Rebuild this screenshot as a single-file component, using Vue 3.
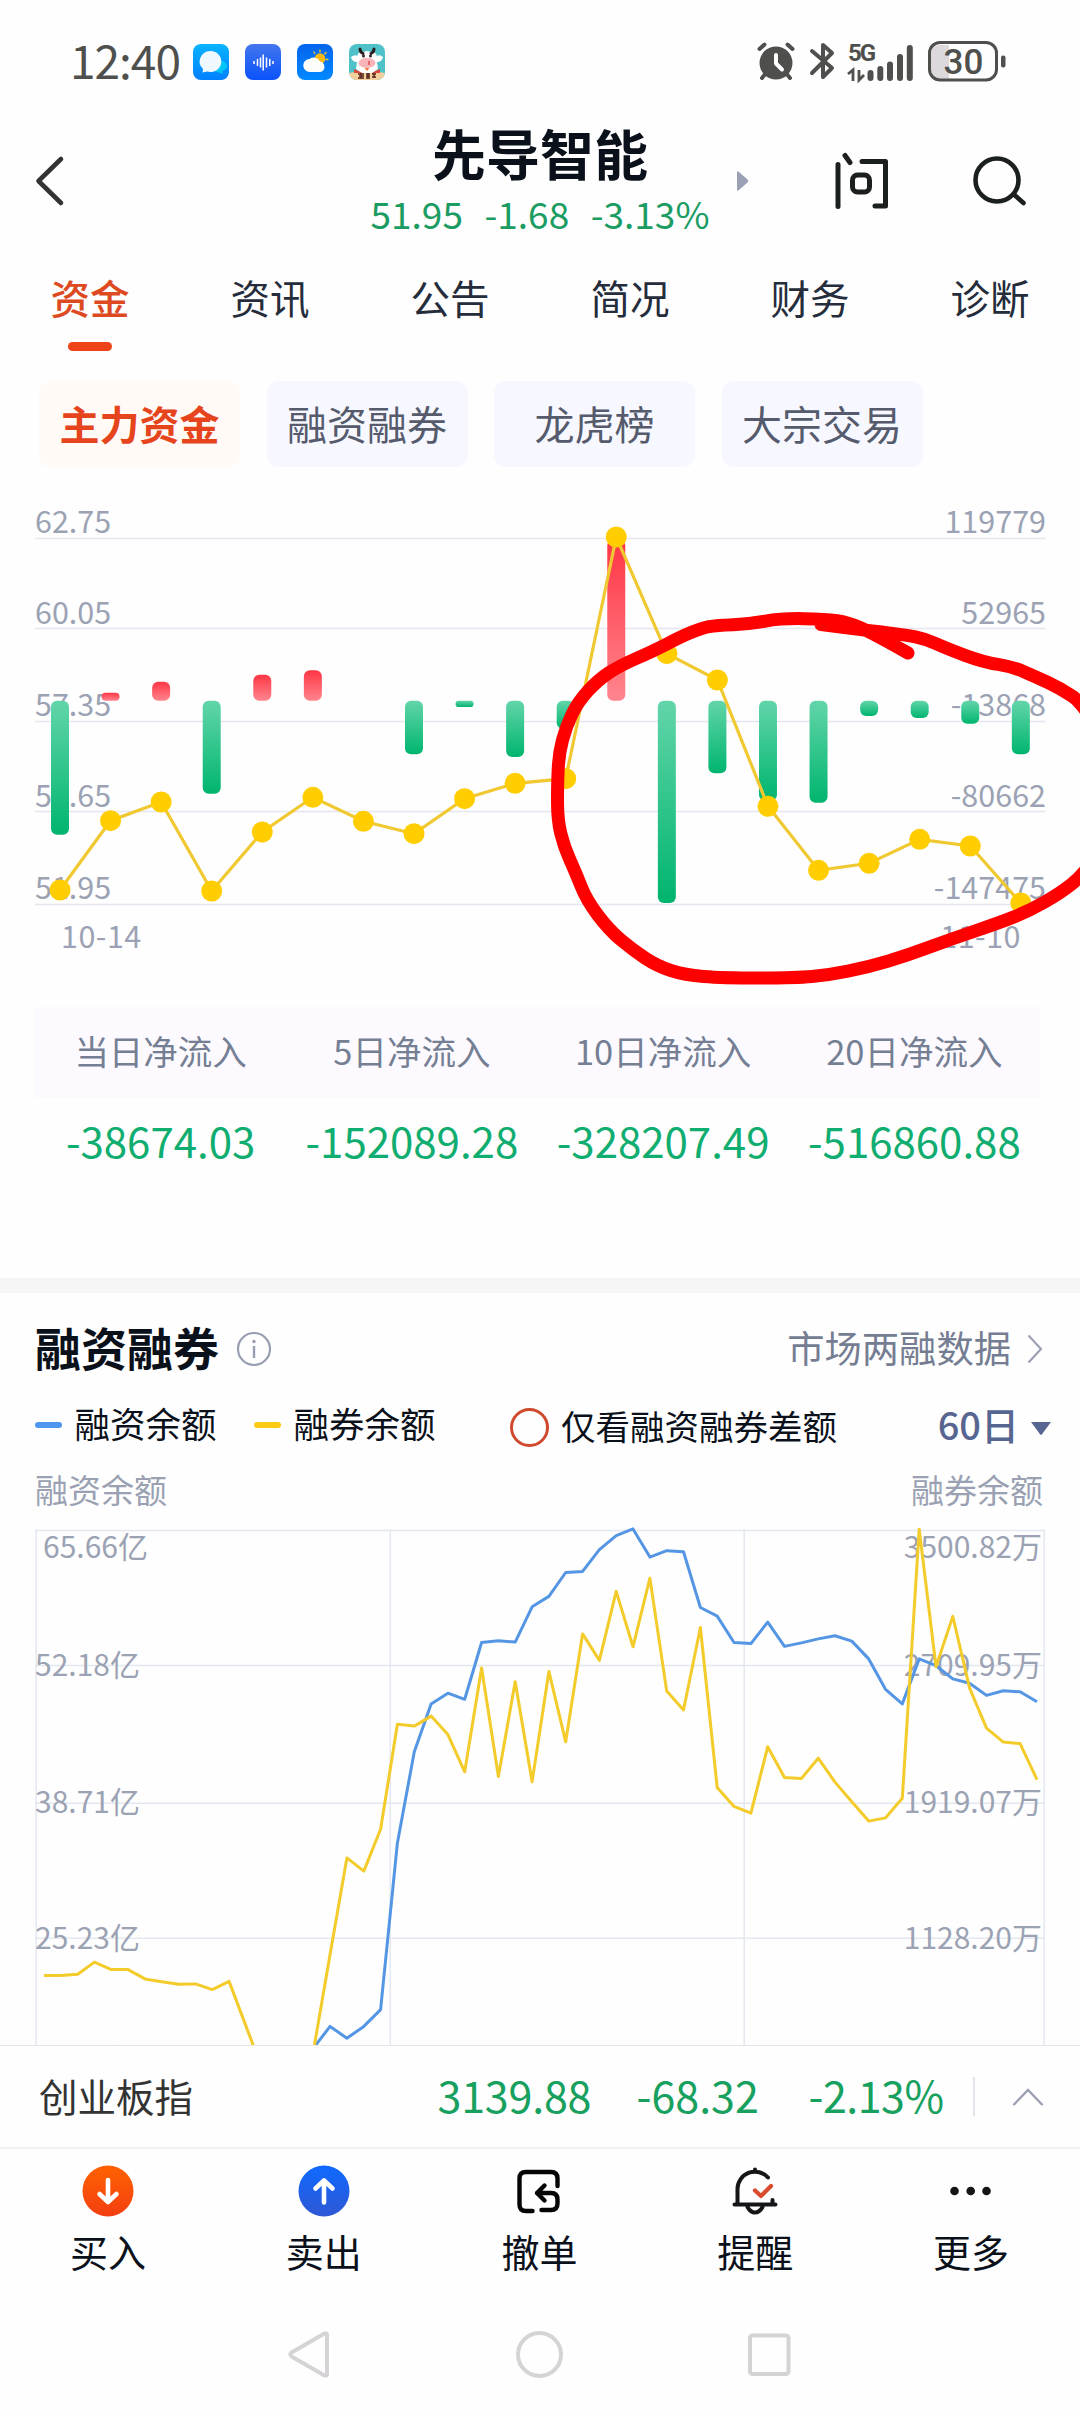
<script setup>
import { ref } from 'vue'

const tabs = ['资金', '资讯', '公告', '简况', '财务', '诊断']
const chips = ['主力资金', '融资融券', '龙虎榜', '大宗交易']
const tab = ref(0)
const chip = ref(0)
const onlyDiff = ref(false)

// 主力资金
const fundGrid = [
  { y: 48.5, base: 43, left: '62.75', right: '119779' },
  { y: 138.5, base: 134, left: '60.05', right: '52965' },
  { y: 231.5, base: 225.7, left: '57.35', right: '-13868' },
  { y: 321.5, base: 316.7, left: '54.65', right: '-80662' },
  { y: 414.5, base: 408.7, left: '51.95', right: '-147475' },
]
const zero = 210.8
const step = 50.57
// 正数流入(红)，负数流出(绿)
const flows = [-134, 8, 19, -93, 26, 30.5, 0, -53.5, -6.2, -56.2, -28, 161, -202.2, -72.5, -100, -102, -15.2, -17.2, -23, -53.5]
const prices = [400, 330.7, 312, 401, 342, 307.3, 331.3, 343.7, 308.7, 293.3, 288.7, 47, 163.7, 190, 316.3, 380.3, 373.3, 349.3, 356, 413]
const bars = flows
  .map((v, i) => ({ x: 51 + i * step, y: v > 0 ? zero - v : zero, h: Math.abs(v), up: v > 0 }))
  .filter((b) => b.h > 0)
const dots = prices.map((y, i) => ({ x: 60 + i * step, y }))
const priceLine = dots.map((d) => `${d.x},${d.y}`).join(' ')

// 手绘圈
const stroke = [
  [908, 163], [872, 142.5], [848, 132.3], [826, 129], [781, 128.3], [750, 134], [716, 135.3], [702, 138],
  [681, 146.7], [654, 160.7], [619, 176], [598, 190], [578, 211.7], [566, 236.7], [559, 263.3], [557.5, 293],
  [557.5, 330], [564, 356.7], [576, 383.3], [586.5, 410], [609, 440], [633, 460], [657, 476], [684.6, 485],
  [722.5, 488], [795, 488], [829, 485], [867, 477.3], [908.5, 465], [953, 448.3], [998, 433.3], [1029, 421],
  [1060, 403.3], [1082, 386], [1108, 350], [1112, 270], [1084, 214], [1060, 198], [1036, 187], [1012, 176.5],
  [984, 172.3], [946, 158.3], [926, 149], [905, 144.7], [872, 141], [821, 134.5],
]
const smooth = (pts) => {
  let d = `M${pts[0]}`
  for (let i = 1; i < pts.length - 1; i++) {
    const [x, y] = pts[i]
    const [nx, ny] = pts[i + 1]
    d += `Q${x} ${y} ${(x + nx) / 2} ${(y + ny) / 2}`
  }
  return d + `L${pts[pts.length - 1]}`
}
const circlePath = smooth(stroke)

const summary = [
  { name: '当日净流入', value: '-38674.03' },
  { name: '5日净流入', value: '-152089.28' },
  { name: '10日净流入', value: '-328207.49' },
  { name: '20日净流入', value: '-516860.88' },
]

// 融资融券
const marginGrid = [
  { y: 30.4, base: 57.9, x: 43, left: '65.66亿', right: '3500.82万' },
  { y: 165.4, base: 176, x: 35, left: '52.18亿', right: '2709.95万' },
  { y: 303.2, base: 313, x: 35, left: '38.71亿', right: '1919.07万' },
  { y: 438.2, base: 448.6, x: 35, left: '25.23亿', right: '1128.20万' },
  { y: 580, base: 569.5, x: 35, left: '11.75亿', right: '337.33万' },
]
const quan = [
  1331, 1331, 1328, 1294, 1315, 1315, 1341, 1349, 1356, 1355, 1371, 1348, 1473, 1598, 1620, 1620, 1545, 1272, 1002, 1039,
  922, 628, 633, 605, 657, 761, 470, 774, 509, 789, 480, 677, 375, 449, 256, 411, 219, 535, 588, 357,
  805, 858, 877, 691, 777, 780, 723, 790, 845, 899, 890, 835, 82, 467, 326, 527, 639, 678, 682, 783,
]
const rong = [
  1535, 1474, 1507, 1474, 1427, 960, 705, 571, 541, 558, 399, 394, 398, 299, 270, 203, 200, 139, 100, 81, 160, 142,
  145, 301, 325, 399, 402, 342, 410, 400, 389, 380, 395, 445, 530, 571, 445, 464, 501, 513, 547, 534, 537, 565,
]
const toLine = (list, start) =>
  list.map((v, i) => `${(44 + (i + start) * 16.83).toFixed(1)},${(v / 2.8).toFixed(1)}`).join(' ')
const quanLine = toLine(quan, 0)
const rongLine = toLine(rong, 16)
</script>

<template>
  <div class="page">
    <div class="status">
      <span class="time">12:40</span>
      <div class="apps">
        <svg width="36" height="36" viewBox="0 0 36 36">
          <defs>
            <linearGradient id="msg" x1="0" y1="0" x2="0" y2="1">
              <stop offset="0" stop-color="#0ab4ff" />
              <stop offset="1" stop-color="#0080ff" />
            </linearGradient>
          </defs>
          <rect width="36" height="36" rx="8" fill="url(#msg)" />
          <path d="M22 22a6 5 0 1 1 7 5l1 3-4-1.500a5 4 0 0 1-4-6z" fill="#00c6f5" />
          <path d="M17 7a11 10.500 0 1 1-3 20.500L9.500 28.500l.5-3.500A11 10.500 0 0 1 17 7z" fill="#f0f8ff" />
        </svg>
        <svg width="36" height="36" viewBox="0 0 36 36">
          <defs>
            <linearGradient id="rec" x1="0" y1="0" x2="0" y2="1">
              <stop offset="0" stop-color="#4476ee" />
              <stop offset="1" stop-color="#0a52fb" />
            </linearGradient>
          </defs>
          <rect width="36" height="36" rx="8" fill="url(#rec)" />
          <path d="M9 17v3M12.500 15v7M15.500 13.500v10M18.200 10.500v16M21.500 13.500v10M24.800 15v7M28 17v3" stroke="#fff" stroke-width="1.500" />
        </svg>
        <svg width="36" height="36" viewBox="0 0 36 36">
          <defs>
            <linearGradient id="sky" x1="0" y1="0" x2="0" y2="1">
              <stop offset="0" stop-color="#0464ee" />
              <stop offset="1" stop-color="#0289ff" />
            </linearGradient>
          </defs>
          <rect width="36" height="36" rx="8" fill="url(#sky)" />
          <path d="M23 5.500v3M16.500 7.500l1.500 2.500M29.500 8l-2 2.200M28.500 15.500h3" stroke="#f9c62c" stroke-width="1.300" />
          <circle cx="23" cy="14.500" r="5.300" fill="#fcb813" />
          <path d="M13 28a6.500 6.500 0 0 1-.5-13 7 7 0 0 1 10.500 2.500 5.400 5.400 0 0 1 .5 10.500z" fill="#fdfdfa" />
        </svg>
        <svg width="36" height="36" viewBox="0 0 36 36">
          <defs>
            <clipPath id="cow"><rect width="36" height="36" rx="8" /></clipPath>
          </defs>
          <g clip-path="url(#cow)">
            <rect width="36" height="36" fill="#4fc1c8" />
            <path d="M0 29q18-4 36 0v7H0z" fill="#f3cf9c" />
            <path d="M5 25l7 3h12l7-3 0 4H5z" fill="#d8493a" />
            <path d="M2 13q4-3 6-1 2-5 7-4 3-2 6 0 5-1 7 4 3-2 6 1-1 5-6 5l1 7-6 4H13l-6-4 1-7q-5 0-6-5z" fill="#fff" />
            <path d="M11 5q0 3 3 4.500M25 5q0 3-3 4.500" stroke="#2a1d1d" stroke-width="3" fill="none" stroke-linecap="round" />
            <ellipse cx="18" cy="19" rx="8.500" ry="5" fill="#f9b4b8" />
            <circle cx="14.500" cy="12" r="1.500" fill="#33282b" />
            <circle cx="21.500" cy="12" r="1.500" fill="#33282b" />
            <path d="M20 17v4" stroke="#dd4f5c" stroke-width="1.500" />
            <path d="M15.500 24h5l-2.500 3z" fill="#ef7a3a" />
            <path d="M9 30h6M10 32h5M9 34h6M12 29v5M17 30h4M17 32h4M17 34h4M19 29v5M23 30h4M25 29v5M23 33h4" stroke="#56231c" stroke-width="1.300" />
          </g>
        </svg>
      </div>
      <svg class="sys" width="250" height="44" viewBox="0 0 250 44">
        <!-- 闹钟 -->
        <circle cx="20" cy="23" r="16.500" fill="#4f504d" />
        <path d="M3.500 9l5-4.500M36.500 9l-5-4.500M6 38l4-5M34 38l-4-5" stroke="#4f504d" stroke-width="4" stroke-linecap="round" />
        <path d="M20 15v8.500l6 6" fill="none" stroke="#fff" stroke-width="4" stroke-linecap="round" stroke-linejoin="round" />
        <!-- 蓝牙 -->
        <path d="M56 11l20 17-9 9V5l9 8-20 20" fill="none" stroke="#4f504d" stroke-width="4" stroke-linecap="round" stroke-linejoin="round" />
        <!-- 信号 -->
        <text x="92" y="21" class="net">5G</text>
        <path d="M92 34l5-4v11M103 30v10l5-5" fill="none" stroke="#4f504d" stroke-width="2.800" />
        <path d="M114.500 33v5M124.300 29v9M134 24.500v13.500M144 17v21M153.800 8v30" stroke="#4f504d" stroke-width="6" stroke-linecap="round" />
        <!-- 电池 -->
        <path d="M184 5h9v34h-9q-9 0-9-9V14q0-9 9-9z" fill="#dcd8dc" />
        <rect x="173.500" y="2.500" width="67" height="37.500" rx="10.500" fill="none" stroke="#4f504d" stroke-width="3" />
        <rect x="245" y="15.500" width="4.500" height="12" rx="2" fill="#4f504d" />
        <text x="207.500" y="33.500" class="batt">30</text>
      </svg>
    </div>

    <div class="head">
      <svg class="back" width="36" height="56" viewBox="0 0 36 56">
        <path d="M27 6L4.500 28 27 50" fill="none" stroke="#333" stroke-width="4.600" stroke-linecap="round" stroke-linejoin="round" />
      </svg>
      <div class="stock">
        <div class="name">先导智能</div>
        <div class="quote"><span>51.95</span><span>-1.68</span><span>-3.13%</span></div>
      </div>
      <svg class="next" width="12" height="20" viewBox="0 0 12 20">
        <path d="M0 1.500q0-2 2-.5l8.500 7.500q1.500 1.500 0 3L2 19q-2 1.500-2-.5z" fill="#9ba1b5" />
      </svg>
      <svg class="ask" width="56" height="60" viewBox="0 0 56 60">
        <g fill="none" stroke="#1b201f" stroke-width="5" stroke-linecap="round" stroke-linejoin="round">
          <path d="M5 14.500v42M12 5.500l5 7M29 11.500h23.500V56H42" />
          <rect x="19.500" y="25" width="17" height="17" rx="5" />
        </g>
      </svg>
      <svg class="search" width="56" height="54" viewBox="0 0 56 54">
        <circle cx="25" cy="26" r="21.500" fill="none" stroke="#1b201f" stroke-width="4.600" />
        <path d="M42 40.500l9.500 8.500" stroke="#1b201f" stroke-width="4.600" stroke-linecap="round" />
      </svg>
    </div>

    <div class="tabs">
      <div v-for="(t, i) in tabs" :key="t" class="tab" :class="{ on: tab === i }" @click="tab = i">{{ t }}</div>
    </div>

    <div class="chips">
      <div v-for="(c, i) in chips" :key="c" class="chip" :class="{ on: chip === i }" @click="chip = i">{{ c }}</div>
    </div>

    <div class="fund">
      <svg width="1080" height="500" viewBox="0 0 1080 500">
        <defs>
          <linearGradient id="up" x1="0" y1="0" x2="0" y2="1">
            <stop offset="0" stop-color="#ff3645" />
            <stop offset="1" stop-color="#ff858e" />
          </linearGradient>
          <linearGradient id="down" x1="0" y1="0" x2="0" y2="1">
            <stop offset="0" stop-color="#62d5aa" />
            <stop offset="1" stop-color="#00b56e" />
          </linearGradient>
        </defs>
        <g v-for="g in fundGrid" :key="g.left">
          <line x1="35" x2="1046" :y1="g.y" :y2="g.y" stroke="#e5e6ef" stroke-width="1.300" />
          <text x="35" :y="g.base" class="axis">{{ g.left }}</text>
          <text x="1046" :y="g.base" class="axis end">{{ g.right }}</text>
        </g>
        <text x="61" y="458" class="axis date">10-14</text>
        <text x="1021" y="458" class="axis date end">11-10</text>
        <rect v-for="b in bars" :key="b.x" :x="b.x" :y="b.y" width="18" :height="b.h" :rx="Math.min(6, b.h / 2)" :fill="b.up ? 'url(#up)' : 'url(#down)'" />
        <polyline :points="priceLine" fill="none" stroke="#f0c832" stroke-width="3.200" />
        <circle v-for="d in dots" :key="d.x" :cx="d.x" :cy="d.y" r="10.500" fill="#ffcd00" />
        <path :d="circlePath" fill="none" stroke="#fe0000" stroke-width="13" stroke-linecap="round" stroke-linejoin="round" />
      </svg>
    </div>

    <div class="summary">
      <div class="row names">
        <div v-for="s in summary" :key="s.name">{{ s.name }}</div>
      </div>
      <div class="row values">
        <div v-for="s in summary" :key="s.value">{{ s.value }}</div>
      </div>
    </div>

    <div class="band"></div>

    <div class="title">
      <h2>融资融券</h2>
      <svg width="36" height="36" viewBox="0 0 36 36">
        <circle cx="18" cy="18" r="16" fill="none" stroke="#989eb2" stroke-width="2.200" />
        <circle cx="18" cy="10.500" r="1.700" fill="#989eb2" />
        <path d="M18 15v12" stroke="#989eb2" stroke-width="2.400" />
      </svg>
      <span class="more">市场两融数据</span>
      <svg width="16" height="30" viewBox="0 0 16 30">
        <path d="M1.500 1.500L14 15 1.500 28.500" fill="none" stroke="#9ca2b4" stroke-width="2.200" />
      </svg>
    </div>

    <div class="legend">
      <i class="dash blue"></i><span class="lg">融资余额</span>
      <i class="dash yellow"></i><span class="lg">融券余额</span>
      <i class="radio" :class="{ on: onlyDiff }" @click="onlyDiff = !onlyDiff"></i>
      <span class="diff">仅看融资融券差额</span>
      <span class="days">60日</span>
      <svg class="caret" width="20" height="13" viewBox="0 0 20 13">
        <path d="M0 0h20L11 12.200q-1 1-2 0z" fill="#576690" />
      </svg>
    </div>

    <div class="axis-names"><span>融资余额</span><span>融券余额</span></div>

    <div class="margin">
      <svg width="1080" height="545" viewBox="0 0 1080 545">
        <path d="M36.200 29.500V545M390.200 29.500V545M744.200 29.500V545M1044.200 29.500V545" stroke="#e3e7f0" stroke-width="1.500" />
        <g v-for="g in marginGrid" :key="g.left">
          <line x1="35" x2="1045" :y1="g.y" :y2="g.y" stroke="#e3e7f0" stroke-width="1.500" />
          <text :x="g.x" :y="g.base" class="axis small">{{ g.left }}</text>
          <text x="1042" :y="g.base" class="axis small end">{{ g.right }}</text>
        </g>
        <polyline :points="rongLine" fill="none" stroke="#5596e4" stroke-width="3" stroke-linejoin="round" />
        <polyline :points="quanLine" fill="none" stroke="#f3cb2a" stroke-width="3" stroke-linejoin="round" />
      </svg>
    </div>

    <div class="index">
      <span class="iname">创业板指</span>
      <span class="v1">3139.88</span>
      <span class="v2">-68.32</span>
      <span class="v3">-2.13%</span>
      <i class="split"></i>
      <svg width="32" height="18" viewBox="0 0 32 18">
        <path d="M2 16.500L16 2l14 14.500" fill="none" stroke="#9aa0b2" stroke-width="2.300" stroke-linecap="round" />
      </svg>
    </div>

    <div class="nav">
      <div class="item">
        <svg width="52" height="52" viewBox="0 0 52 52">
          <defs>
            <linearGradient id="buy" x1="0" y1="0" x2="0" y2="1">
              <stop offset="0" stop-color="#ff6200" />
              <stop offset="1" stop-color="#f33e12" />
            </linearGradient>
          </defs>
          <circle cx="26" cy="26" r="25.500" fill="url(#buy)" />
          <path d="M26 15v21M17.500 29l8.500 8 8.500-8" fill="none" stroke="#fff" stroke-width="4.600" stroke-linecap="round" stroke-linejoin="round" />
        </svg>
        <span>买入</span>
      </div>
      <div class="item">
        <svg width="52" height="52" viewBox="0 0 52 52">
          <defs>
            <linearGradient id="sell" x1="0" y1="0" x2="0" y2="1">
              <stop offset="0" stop-color="#0f6aff" />
              <stop offset="1" stop-color="#2f57d4" />
            </linearGradient>
          </defs>
          <circle cx="26" cy="26" r="25.500" fill="url(#sell)" />
          <path d="M26 37.500v-21M17.500 23.500l8.500-8 8.500 8" fill="none" stroke="#fff" stroke-width="4.600" stroke-linecap="round" stroke-linejoin="round" />
        </svg>
        <span>卖出</span>
      </div>
      <div class="item">
        <svg width="52" height="52" viewBox="0 0 52 52">
          <g fill="none" stroke="#050505" stroke-width="4.400" stroke-linecap="round" stroke-linejoin="round">
            <path d="M19.500 46H13q-6.500 0-6.500-6.500V13.500Q6.500 7 13 7h25q6.500 0 6.500 6.500V21" />
            <path d="M31.500 20.500l-7.500 7.500 7.500 7.500M24 28h14q6.500 0 6.500 6.500v4q0 6.500-6.500 6.500H28.500" />
          </g>
        </svg>
        <span>撤单</span>
      </div>
      <div class="item">
        <svg width="52" height="52" viewBox="0 0 52 52">
          <g fill="none" stroke="#131517" stroke-width="4" stroke-linecap="round" stroke-linejoin="round">
            <path d="M26 4.500v2M39 12.500A17.500 17.500 0 0 0 8.500 23.500V39M5.500 39.500h41M43.500 35v4" />
            <path d="M18.500 42q3 5.500 7.500 5.500t7.500-5.500" />
          </g>
          <path d="M26 25.500l6 5.500 10-10" fill="none" stroke="#d84b2c" stroke-width="4.200" stroke-linecap="round" stroke-linejoin="round" />
        </svg>
        <span>提醒</span>
      </div>
      <div class="item">
        <svg width="52" height="52" viewBox="0 0 52 52" fill="#131517">
          <circle cx="9.500" cy="26" r="4.300" />
          <circle cx="25.700" cy="26" r="4.300" />
          <circle cx="41.500" cy="26" r="4.300" />
        </svg>
        <span>更多</span>
      </div>
    </div>

    <div class="keys">
      <svg width="504" height="50" viewBox="0 0 504 50">
        <g fill="none" stroke="#d6d3d6" stroke-width="4" stroke-linejoin="round">
          <path d="M3.500 23.500Q1 25.500 3.500 27.500l33 19q2.500 1 2.500-1.500V6q0-2.500-2.500-1.500z" />
          <circle cx="251.500" cy="25.500" r="21.500" />
          <rect x="462" y="6.500" width="38.500" height="38.500" rx="2.500" />
        </g>
      </svg>
    </div>
  </div>
</template>

<style>
body {
  margin: 0;
  background: #fefefe;
}
</style>

<style scoped>
.page {
  width: 1080px;
  height: 2412px;
  overflow: hidden;
  background: #fefefe;
  font-family: 'Noto Sans CJK SC', sans-serif;
  color: #0b111b;
  display: flex;
  flex-direction: column;
}
.page > div {
  flex: none;
  box-sizing: border-box;
}
svg {
  display: block;
  flex: none;
}
.status {
  height: 120px;
  display: flex;
  align-items: center;
  padding: 4px 74px 0 70px;
}
.time {
  width: 123px;
  font-size: 46px;
  line-height: 60px;
  letter-spacing: -1px;
  color: #4f504d;
  margin-top: -6px;
}
.apps {
  display: flex;
  gap: 16px;
}
.sys {
  margin-left: auto;
  margin-top: 0;
}
.net {
  font: bold 24px 'Roboto', sans-serif;
  letter-spacing: -2px;
  fill: #4f504d;
}
.batt {
  font: 500 35px 'Roboto', sans-serif;
  text-anchor: middle;
  fill: #4f504d;
}
.head {
  height: 130px;
  display: flex;
  align-items: center;
}
.back {
  margin-left: 33.5px;
  margin-top: -9px;
}
.stock {
  margin-left: 301px;
  margin-top: -9px;
  width: 339px;
  text-align: center;
}
.name {
  font-size: 54px;
  line-height: 64px;
  font-weight: bold;
}
.quote {
  display: flex;
  justify-content: space-between;
  font-size: 37px;
  line-height: 56px;
  color: #1b9c62;
}
.next {
  margin-left: 27px;
  margin-top: -8px;
}
.ask {
  margin-left: 84px;
  margin-top: -10px;
}
.search {
  margin-left: 83px;
  margin-top: -9px;
}
.tabs {
  height: 110px;
  display: grid;
  grid-template-columns: repeat(6, 1fr);
  text-align: center;
}
.tab {
  font-size: 39.5px;
  line-height: 60px;
  padding-top: 17px;
  color: #252c3b;
}
.tab.on {
  color: #dd4a22;
  font-weight: 500;
}
.tab.on::after {
  content: '';
  display: block;
  width: 44px;
  height: 9px;
  border-radius: 5px;
  margin: 15px auto 0;
  background: #ee4318;
}
.chips {
  height: 130px;
  padding: 21px 0 0 39px;
  display: flex;
  gap: 26.5px;
}
.chip {
  width: 201px;
  height: 86px;
  line-height: 84px;
  border-radius: 12px;
  background: #f6f7ff;
  color: #555b6c;
  font-size: 40px;
  text-align: center;
}
.chip.on {
  background: #fffaf6;
  color: #e5441c;
  font-weight: bold;
}
.fund {
  height: 517px;
}
.axis {
  font-size: 30.5px;
  fill: #9ba2b3;
}
.axis.date {
  letter-spacing: 0.5px;
}
.axis.small {
  font-size: 30px;
}
.end {
  text-anchor: end;
}
.summary {
  height: 271px;
  padding: 0 40px 0 35px;
}
.row {
  display: grid;
  grid-template-columns: repeat(4, 1fr);
  text-align: center;
}
.names {
  height: 91px;
  line-height: 86px;
  background: #fdfaff;
  color: #757f94;
  font-size: 34.5px;
}
.values {
  font-size: 42px;
  line-height: 84px;
  color: #10ad70;
}
.band {
  height: 15px;
  background: #f6f6f6;
}
.title {
  height: 110px;
  display: flex;
  align-items: center;
  padding: 2px 37px 0 35px;
}
h2 {
  margin: -7px 17px 0 0;
  font-size: 46px;
  line-height: 60px;
  font-weight: bold;
}
.more {
  margin: -5px 16px 0 auto;
  font-size: 37.3px;
  color: #757d92;
}
.legend {
  height: 44px;
  display: flex;
  align-items: center;
  font-size: 35.5px;
}
.dash {
  width: 27px;
  height: 6px;
  border-radius: 3px;
}
.blue {
  background: #4f96f0;
  margin-left: 35px;
}
.yellow {
  background: #fccb14;
  margin-left: 37px;
}
.lg {
  width: 142px;
  margin-left: 12.5px;
  margin-top: -5px;
}
.yellow + .lg {
  margin-left: 13px;
}
.radio {
  width: 33px;
  height: 33px;
  border: 3px solid #cf4a2d;
  border-radius: 50%;
  margin-left: 74px;
  margin-top: 5px;
}
.radio.on {
  background: #cf4a2d;
}
.diff {
  margin-left: 12.5px;
  font-size: 34.5px;
}
.days {
  margin-left: auto;
  font-size: 38px;
  font-weight: 500;
  color: #576690;
  margin-top: -3px;
}
.caret {
  margin: 6px 29px 0 12px;
}
.axis-names {
  height: 73px;
  display: flex;
  justify-content: space-between;
  padding: 17px 37px 0 35px;
  font-size: 33px;
  line-height: 50px;
  color: #9aa1b2;
}
.axis-names + .margin {
  margin-top: -20px;
}
.margin {
  height: 545px;
  overflow: hidden;
}
.index {
  height: 104px;
  border-top: 1.500px solid #e4e6ec;
  border-bottom: 2px solid #eff0f2;
  display: flex;
  align-items: center;
  font-size: 43px;
  color: #17a05e;
  padding-left: 39px;
}
.index span {
  margin-top: -6px;
  white-space: nowrap;
}
.index .iname {
  width: 398.5px;
  font-size: 38.5px;
  color: #333;
  margin-top: -4px;
}
.v1 {
  width: 199px;
  letter-spacing: -0.200px;
}
.v2 {
  width: 172px;
}
.v3 {
  width: 164px;
  letter-spacing: -0.500px;
}
.split {
  width: 2.500px;
  height: 39px;
  background: #e2e4eb;
  margin-right: 36.5px;
}
.nav {
  height: 151px;
  display: grid;
  grid-template-columns: repeat(5, 1fr);
  padding-right: 1px;
}
.item {
  display: flex;
  flex-direction: column;
  align-items: center;
  padding-top: 16px;
}
.item span {
  font-size: 38px;
  line-height: 56px;
  margin-top: 6px;
}
.keys {
  padding: 29px 0 0 288px;
}
</style>
